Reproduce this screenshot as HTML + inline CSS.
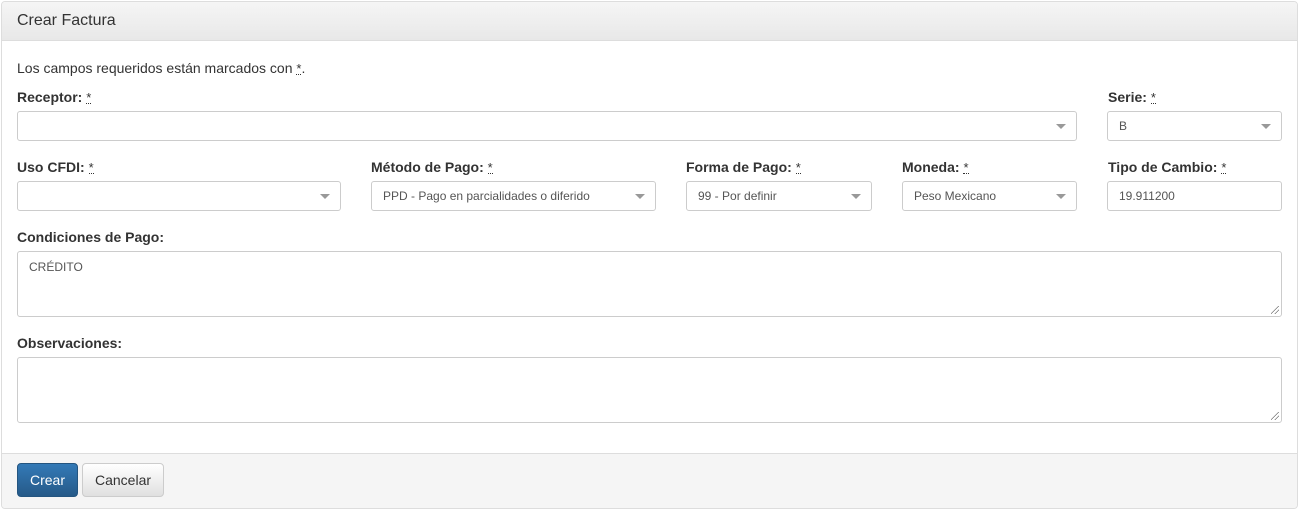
<!DOCTYPE html>
<html><head><meta charset="utf-8"><style>
*{box-sizing:border-box;margin:0;padding:0}
body{width:1299px;height:511px;background:#fff;font-family:"Liberation Sans",Arial,sans-serif;color:#333;position:relative;overflow:hidden}
.panel{position:absolute;left:1px;top:1px;width:1297px;height:508px;border:1px solid #ddd;border-radius:4px;overflow:hidden}
.hd{position:absolute;left:0;top:0;right:0;height:39px;background:linear-gradient(#f5f5f5,#e8e8e8);border-bottom:1px solid #ddd;font-size:16px;padding:10px 15px;line-height:18px}
.ft{position:absolute;left:0;bottom:0;right:0;height:55px;background:#f5f5f5;border-top:1px solid #ddd}
.a{position:absolute}
.lbl{position:absolute;font-size:14px;font-weight:bold;line-height:16px}
.req{font-weight:normal;border-bottom:1px dotted #333;text-decoration:none;font-size:13px;line-height:10px;display:inline-block}
.in{position:absolute;height:30px;border:1px solid #ccc;border-radius:3px;font-size:12px;color:#555;padding:0 11px;line-height:28px;background:#fff}
.car{position:absolute;right:10px;top:12px;width:0;height:0;border-left:5px solid transparent;border-right:5px solid transparent;border-top:5px solid #999}
.ta{position:absolute;border:1px solid #ccc;border-radius:3px;font-size:12px;color:#555;padding:8px 11px;background:#fff}
.grip{position:absolute;right:2px;bottom:2px;width:8px;height:8px;background:linear-gradient(135deg,transparent 45%,#777 45%,#777 52%,transparent 52%,transparent 70%,#777 70%,#777 77%,transparent 77%)}
.btn{position:absolute;top:463px;height:34px;border-radius:4px;font-size:14px;line-height:32px;text-align:center}
</style></head><body>
<div class="panel">
<div class="hd">Crear Factura</div>
<div class="ft"></div>
</div>
<div class="a" style="left:17px;top:60px;font-size:14px;line-height:16px">Los campos requeridos están marcados con <span class="req">*</span>.</div>

<div class="lbl" style="left:17px;top:89px">Receptor: <span class="req">*</span></div>
<div class="lbl" style="left:1108px;top:89px">Serie: <span class="req">*</span></div>
<div class="in" style="left:17px;top:111px;width:1060px"><div class="car"></div></div>
<div class="in" style="left:1107px;top:111px;width:175px">B<div class="car"></div></div>

<div class="lbl" style="left:17px;top:159px">Uso CFDI: <span class="req">*</span></div>
<div class="lbl" style="left:371px;top:159px">Método de Pago: <span class="req">*</span></div>
<div class="lbl" style="left:686px;top:159px">Forma de Pago: <span class="req">*</span></div>
<div class="lbl" style="left:902px;top:159px">Moneda: <span class="req">*</span></div>
<div class="lbl" style="left:1108px;top:159px">Tipo de Cambio: <span class="req">*</span></div>
<div class="in" style="left:17px;top:181px;width:324px"><div class="car"></div></div>
<div class="in" style="left:371px;top:181px;width:285px">PPD - Pago en parcialidades o diferido<div class="car"></div></div>
<div class="in" style="left:686px;top:181px;width:186px">99 - Por definir<div class="car"></div></div>
<div class="in" style="left:902px;top:181px;width:175px">Peso Mexicano<div class="car"></div></div>
<div class="in" style="left:1107px;top:181px;width:175px">19.911200</div>

<div class="lbl" style="left:17px;top:229px">Condiciones de Pago:</div>
<div class="ta" style="left:17px;top:251px;width:1265px;height:66px">CRÉDITO<div class="grip"></div></div>
<div class="lbl" style="left:17px;top:335px">Observaciones:</div>
<div class="ta" style="left:17px;top:357px;width:1265px;height:66px"><div class="grip"></div></div>

<div class="btn" style="left:17px;width:61px;background:linear-gradient(#337ab7,#265a88);border:1px solid #245580;color:#fff">Crear</div>
<div class="btn" style="left:82px;width:82px;background:linear-gradient(#fff,#e0e0e0);border:1px solid #ccc;color:#333">Cancelar</div>
</body></html>
